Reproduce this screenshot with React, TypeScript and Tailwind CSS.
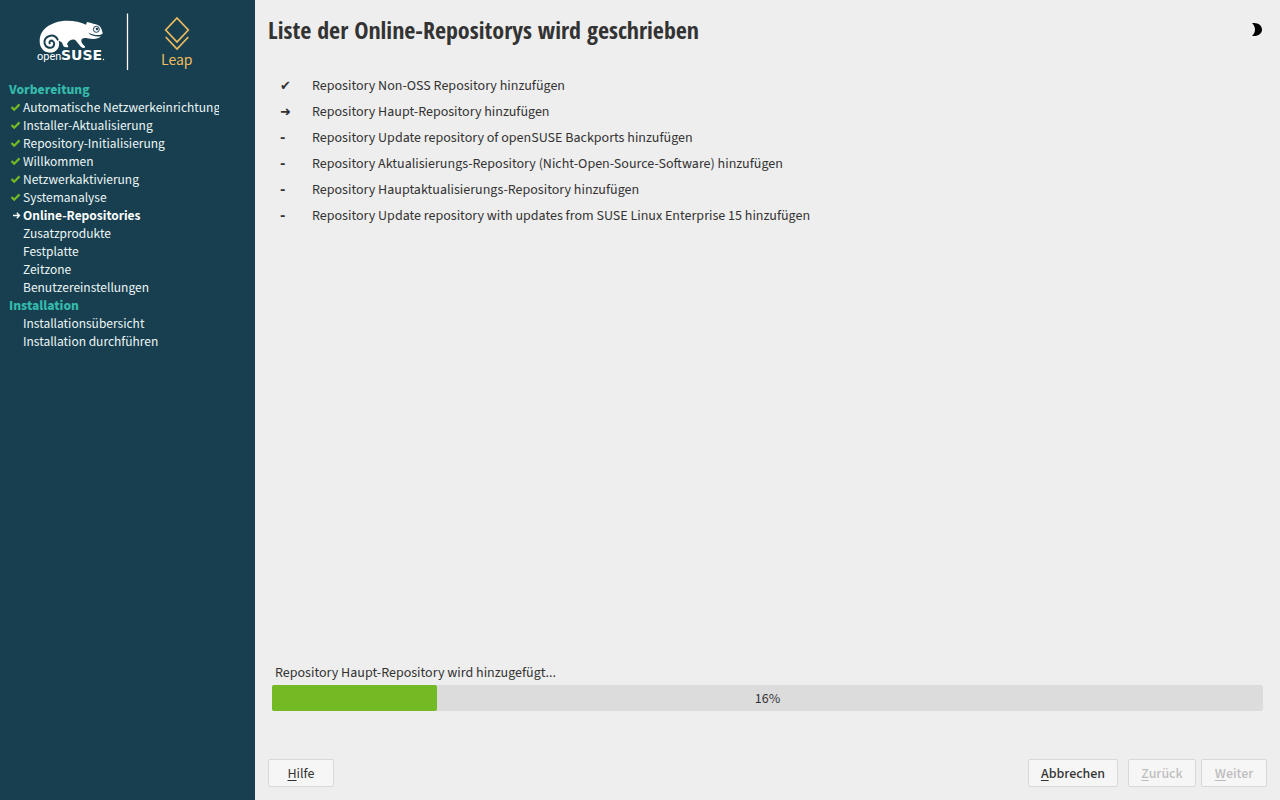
import React from 'react';

type StepState = 'done' | 'current' | 'open';

interface Step {
  label: string;
  state: StepState;
}

interface Section {
  title: string;
  steps: Step[];
}

const SECTIONS: Section[] = [
  {
    title: 'Vorbereitung',
    steps: [
      { label: 'Automatische Netzwerkeinrichtung', state: 'done' },
      { label: 'Installer-Aktualisierung', state: 'done' },
      { label: 'Repository-Initialisierung', state: 'done' },
      { label: 'Willkommen', state: 'done' },
      { label: 'Netzwerkaktivierung', state: 'done' },
      { label: 'Systemanalyse', state: 'done' },
      { label: 'Online-Repositories', state: 'current' },
      { label: 'Zusatzprodukte', state: 'open' },
      { label: 'Festplatte', state: 'open' },
      { label: 'Zeitzone', state: 'open' },
      { label: 'Benutzereinstellungen', state: 'open' },
    ],
  },
  {
    title: 'Installation',
    steps: [
      { label: 'Installationsübersicht', state: 'open' },
      { label: 'Installation durchführen', state: 'open' },
    ],
  },
];

const TASKS: Step[] = [
  { label: 'Repository Non-OSS Repository hinzufügen', state: 'done' },
  { label: 'Repository Haupt-Repository hinzufügen', state: 'current' },
  { label: 'Repository Update repository of openSUSE Backports hinzufügen', state: 'open' },
  { label: 'Repository Aktualisierungs-Repository (Nicht-Open-Source-Software) hinzufügen', state: 'open' },
  { label: 'Repository Hauptaktualisierungs-Repository hinzufügen', state: 'open' },
  { label: 'Repository Update repository with updates from SUSE Linux Enterprise 15 hinzufügen', state: 'open' },
];

const TASK_MARKS: Record<StepState, string> = { done: '✔', current: '➜', open: '-' };

const PROGRESS = 16.65;

const Logo: React.FC = () => (
  <svg className="h-20 w-full" viewBox="0 0 255 80" preserveAspectRatio="xMinYMin meet" role="img" aria-label="openSUSE Leap">
    <g transform="scale(0.33333)">
      <path
        fill="#fff"
        d="M119 124C118 98 136 78 165 68C196 58 232 62 258 74L261 66C268 67 274 69 280 71C290 72 301 77 303 84C305 89 308 95 308 101C300 107 285 107 265 98C272 107 288 111 303 109C294 119 276 118 262 115C252 113 245 115 244 121C243 128 249 134 255 139L254 144C248 144 243 142 240 137C234 131 230 122 224 119C215 117 207 122 203 128C200 132 202 135 205 138L204 142C196 142 190 141 189 135C187 128 184 124 176 122C182 141 170 158 150 158C131 158 119 143 119 124Z"
      />
      <path
        fill="none"
        stroke="#173f4f"
        strokeWidth="6"
        strokeLinecap="round"
        d="M173 119C168 109 158 105 148 108C137 111 131 121 134 131C137 141 147 146 156 142C164 138 165 127 158 123C152 120 147 124 149 130"
      />
      <circle cx="289" cy="88" r="9" fill="none" stroke="#173f4f" strokeWidth="3" />
      <circle cx="291" cy="87" r="4" fill="#173f4f" />
    </g>
    <text x="37" y="60" fill="#fff" fontSize="11" className="font-['Roboto',sans-serif]">open</text>
    <text x="61" y="60" fill="#fff" fontSize="14" fontWeight="700" className="font-['DejaVu_Sans',sans-serif]">SUSE</text>
    <circle cx="103.500" cy="59.500" r="0.700" fill="#fff" />
    <path d="M127.500 13.500V70" stroke="#fff" strokeWidth="1.300" />
    <path d="M177 18L188.300 30L177 42L165.700 30ZM165.700 37L177 49L188.300 37" fill="none" stroke="#efbc5e" strokeWidth="1.700" />
    <text x="161" y="65" fill="#efbc5e" fontSize="14" className="font-['Noto_Sans_CJK_SC',sans-serif]">Leap</text>
  </svg>
);

const StepIcon: React.FC<{ state: StepState }> = ({ state }) => {
  if (state === 'open') return null;
  return (
    <svg className="h-3 w-3" viewBox="0 0 12 12" fill="none">
      {state === 'done' ? (
        <path d="M2.500 6L5.200 8.700L10.500 3.400" stroke="#73ba25" strokeWidth="2.200" />
      ) : (
        <path d="M4 6.500H10.500M7.800 3.800L10.500 6.500L7.800 9.200" stroke="#fff" strokeWidth="1.300" />
      )}
    </svg>
  );
};

interface WizardButtonProps {
  label: string;
  disabled?: boolean;
  className?: string;
}

const WizardButton: React.FC<WizardButtonProps> = ({ label, disabled, className = '' }) => (
  <button
    type="button"
    disabled={disabled}
    className={`h-7 rounded-xs border border-[#d8d8d8] bg-[#f6f6f6] pt-0.5 text-[#333] disabled:text-[#bdbdbd] ${className}`}
  >
    <span className="underline underline-offset-2">{label[0]}</span>
    {label.slice(1)}
  </button>
);

const App: React.FC = () => {
  return (
    <div className="flex min-h-screen bg-[#eee] font-['Source_Sans_Pro','Source_Sans_3','Noto_Sans_CJK_SC',sans-serif] text-[14px] leading-[18px] text-[#333]">
      <aside className="w-[255px] shrink-0 bg-[#173f4f] font-['Noto_Sans_CJK_SC',sans-serif] text-[12px] leading-[18px] text-[#eef6f7]">
        <Logo />
        <nav className="mr-9 overflow-hidden pl-[9px]">
          {SECTIONS.map((section) => (
            <section key={section.title}>
              <h2 className="font-black text-[#35b9ab]">{section.title}</h2>
              <ul>
                {section.steps.map((step) => (
                  <li key={step.label} className="flex items-center whitespace-nowrap">
                    <span className="w-[14px] shrink-0">
                      <StepIcon state={step.state} />
                    </span>
                    <span className={step.state === 'current' ? 'font-bold text-white' : ''}>{step.label}</span>
                  </li>
                ))}
              </ul>
            </section>
          ))}
        </nav>
      </aside>

      <main className="flex min-w-0 flex-1 flex-col px-[13px] pb-[13px]">
        <header className="flex h-[60px] items-center justify-between">
          <h1 className="font-['Open_Sans_Condensed','Liberation_Sans_Narrow',sans-serif] text-2xl font-bold">
            Liste der Online-Repositorys wird geschrieben
          </h1>
          <button type="button" aria-label="Dunkles Design" className="mr-1">
            <svg className="h-4 w-4" viewBox="0 0 16 16">
              <path d="M5 1.200C10 0 15 3 15 7.500C15 12 10 15 5 13.800C9 10.500 9 4.500 5 1.200Z" fill="#000" />
            </svg>
          </button>
        </header>

        <ul className="mt-[13px] px-3">
          {TASKS.map((task) => (
            <li key={task.label} className="flex h-[26px] items-center">
              <span className="w-8 shrink-0 font-['DejaVu_Sans',sans-serif] text-[13px] font-bold">
                {TASK_MARKS[task.state]}
              </span>
              <span>{task.label}</span>
            </li>
          ))}
        </ul>

        <div className="mx-1 mt-auto">
          <p id="progress-label" className="mb-[3px] px-[3px]">Repository Haupt-Repository wird hinzugefügt...</p>
          <div
            role="progressbar"
            aria-labelledby="progress-label"
            aria-valuenow={Math.floor(PROGRESS)}
            className="relative flex h-[26px] items-center justify-center rounded-xs bg-[#dcdcdc] pt-0.5"
          >
            <div className="absolute inset-y-0 left-0 rounded-xs bg-[#73ba25]" style={{ width: `${PROGRESS}%` }} />
            <span>{Math.floor(PROGRESS)}%</span>
          </div>
        </div>

        <footer className="mt-12 flex">
          <WizardButton label="Hilfe" className="w-[66px]" />
          <WizardButton label="Abbrechen" className="ml-auto w-[90px] font-medium" />
          <WizardButton label="Zurück" className="ml-[10px] w-[68px] font-medium" disabled />
          <WizardButton label="Weiter" className="ml-[5px] w-[66px] font-medium" disabled />
        </footer>
      </main>
    </div>
  );
};

export default App;
